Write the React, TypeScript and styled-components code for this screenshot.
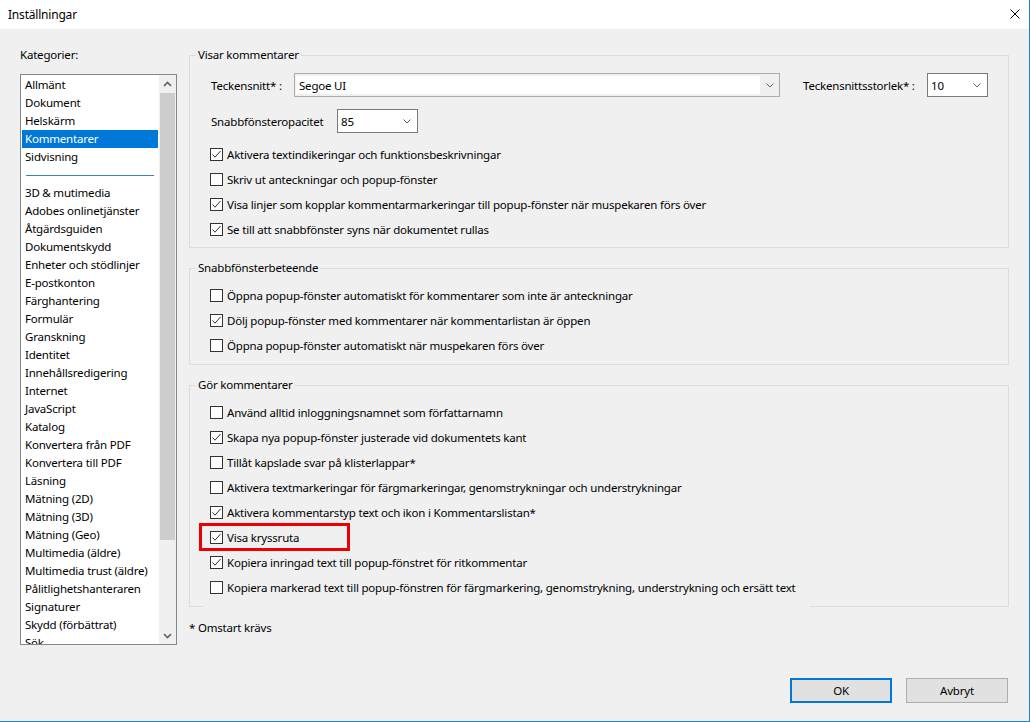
import React from "react";
import styled, { createGlobalStyle } from "styled-components";

const FONT = `"Noto Sans", "Open Sans", sans-serif`;

const GlobalStyle = createGlobalStyle`
  html, body { margin: 0; padding: 0; background: #ffffff; }
  body { font-family: ${FONT}; font-size: 11.5px; letter-spacing: -0.2px; color: #000; }
  *, *::before, *::after { box-sizing: border-box; }
`;

const Window = styled.div`
  width: 1030px;
  height: 722px;
  background: #f0f0f0;
  border-right: 1px solid #1883d7;
  border-bottom: 1px solid #1883d7;
  display: flex;
  flex-direction: column;
`;

const TitleBar = styled.div`
  height: 29px;
  flex: none;
  background: #ffffff;
  display: flex;
  align-items: center;
  justify-content: space-between;
  padding: 0 9px 0 8px;
  font-size: 12px;
`;

const CloseButton = styled.span`
  width: 10px;
  height: 10px;
  display: flex;
  margin-top: -1px;
`;

const Main = styled.div`
  display: flex;
  gap: 12px;
  padding: 18px 20px 0 20px;
`;

const Sidebar = styled.div`
  width: 157px;
  flex: none;
  display: flex;
  flex-direction: column;
`;

const SideLabel = styled.div`
  line-height: 16px;
  height: 16px;
  margin-bottom: 11px;
`;

const ListBox = styled.div`
  height: 571px;
  border: 1px solid #828790;
  background: #ffffff;
  display: flex;
  overflow: hidden;
`;

const ListItems = styled.div`
  flex: 1;
  padding: 1px;
  overflow: hidden;
`;

const Item = styled.div<{ $selected?: boolean }>`
  height: 18px;
  line-height: 18px;
  padding-left: 3px;
  white-space: nowrap;
  background: ${(p) => (p.$selected ? "#0078d7" : "transparent")};
  color: ${(p) => (p.$selected ? "#ffffff" : "#000000")};
`;

const Separator = styled.div`
  height: 18px;
  display: flex;
  align-items: center;
  padding: 0 4px;
  &::after {
    content: "";
    flex: 1;
    height: 1px;
    background: #3a80c4;
  }
`;

const ScrollBar = styled.div`
  width: 17px;
  flex: none;
  background: #f0f0f0;
  display: flex;
  flex-direction: column;
`;

const ScrollButton = styled.div`
  height: 17px;
  flex: none;
  display: flex;
  align-items: center;
  justify-content: center;
`;

const Track = styled.div`
  flex: 1;
  padding: 1px 1px 0 1px;
`;

const Thumb = styled.div`
  height: 447px;
  background: #cdcdcd;
`;

const Content = styled.div`
  width: 820px;
  flex: none;
  display: flex;
  flex-direction: column;
`;

const Group = styled.fieldset<{ $gap?: boolean }>`
  margin: ${(p) => (p.$gap ? "12px 0 0 0" : "0")};
  padding: 0;
  border: 1px solid #dcdcdc;
  min-width: 0;
`;

const Legend = styled.legend`
  margin-left: 6px;
  padding: 0 2px;
  line-height: 16px;
  height: 16px;
`;

const GroupBody = styled.div<{ $top: number; $bottom: number }>`
  padding: ${(p) => `${p.$top}px 0 ${p.$bottom}px 13px`};
`;

const FieldRow = styled.div<{ $mt?: number; $mb?: number }>`
  display: flex;
  align-items: center;
  height: 24px;
  margin: ${(p) => `${p.$mt ?? 0}px 0 ${p.$mb ?? 0}px 8px`};
`;

const FieldLabel = styled.span<{ $w: number; $ml?: number }>`
  width: ${(p) => p.$w}px;
  margin-left: ${(p) => p.$ml ?? 0}px;
  flex: none;
  white-space: nowrap;
`;

const Combo = styled.div<{ $w: number }>`
  width: ${(p) => p.$w}px;
  height: 24px;
  flex: none;
  border: 1px solid #adadad;
  display: flex;
  align-items: stretch;
  padding: 2px 0 2px 1px;
`;

const ComboField = styled.div`
  flex: 1;
  background: #ffffff;
  padding-left: 3px;
  display: flex;
  align-items: center;
`;

const ComboArrow = styled.div`
  width: 19px;
  flex: none;
  display: flex;
  align-items: center;
  justify-content: center;
`;

const Select = styled.div<{ $w: number }>`
  width: ${(p) => p.$w}px;
  height: 24px;
  flex: none;
  border: 1px solid #7a7a7a;
  background: #ffffff;
  display: flex;
  align-items: center;
  justify-content: space-between;
  padding: 0 6px 0 3px;
`;

const CheckRow = styled.div<{ $cover?: boolean; $highlight?: boolean }>`
  width: fit-content;
  height: ${(p) => (p.$cover ? "33px" : "25px")};
  padding: ${(p) => (p.$cover ? "0 14px 8px 7px" : "0 14px 0 7px")};
  margin-bottom: ${(p) => (p.$cover ? "-8px" : "0")};
  background: ${(p) => (p.$cover ? "#f0f0f0" : "transparent")};
  display: flex;
  align-items: center;
  gap: 4px;
  white-space: nowrap;
  position: relative;
  ${(p) =>
    p.$highlight
      ? `&::after {
    content: "";
    position: absolute;
    left: -4px;
    top: -2px;
    width: 151px;
    height: 28px;
    border: 3px solid #ee0000;
  }`
      : ""}
`;

const Box = styled.span`
  width: 13px;
  height: 13px;
  flex: none;
  border: 1px solid #333333;
  background: #ffffff;
  display: flex;
`;

const Footnote = styled.div`
  margin-top: 13px;
  line-height: 16px;
`;

const Footer = styled.div`
  margin-top: auto;
  display: flex;
  justify-content: flex-end;
  gap: 14px;
  padding: 0 21px 18px 0;
`;

const Button = styled.button<{ $default?: boolean }>`
  width: 102px;
  height: 25px;
  font-family: ${FONT};
  font-size: 11.5px;
  letter-spacing: -0.2px;
  color: #000;
  background: #e1e1e1;
  border: ${(p) => (p.$default ? "2px solid #0078d7" : "1px solid #adadad")};
  padding: 0;
`;

const Chevron = () => (
  <svg width="8" height="5" viewBox="0 0 8 5">
    <polyline points="0.5,0.5 4,4 7.5,0.5" fill="none" stroke="#606060" strokeWidth="1" />
  </svg>
);

const ScrollArrow = ({ up }: { up?: boolean }) => (
  <svg width="9" height="6" viewBox="0 0 9 6">
    <polyline
      points={up ? "1,5 4.5,1.5 8,5" : "1,1 4.5,4.5 8,1"}
      fill="none"
      stroke="#606060"
      strokeWidth="1.6"
    />
  </svg>
);

const Check = ({ checked }: { checked: boolean }) => (
  <Box>
    {checked && (
      <svg width="11" height="11" viewBox="0 0 11 11">
        <polyline points="1.5,5.5 4,8.2 9.5,2" fill="none" stroke="#333333" strokeWidth="1" />
      </svg>
    )}
  </Box>
);

type Opt = { text: string; checked: boolean; cover?: boolean; highlight?: boolean };

const CheckItem = ({ o }: { o: Opt }) => (
  <CheckRow $cover={o.cover} $highlight={o.highlight}>
    <Check checked={o.checked} />
    <span>{o.text}</span>
  </CheckRow>
);

const topItems = ["Allmänt", "Dokument", "Helskärm", "Kommentarer", "Sidvisning"];
const restItems = [
  "3D & mutimedia",
  "Adobes onlinetjänster",
  "Åtgärdsguiden",
  "Dokumentskydd",
  "Enheter och stödlinjer",
  "E-postkonton",
  "Färghantering",
  "Formulär",
  "Granskning",
  "Identitet",
  "Innehållsredigering",
  "Internet",
  "JavaScript",
  "Katalog",
  "Konvertera från PDF",
  "Konvertera till PDF",
  "Läsning",
  "Mätning (2D)",
  "Mätning (3D)",
  "Mätning (Geo)",
  "Multimedia (äldre)",
  "Multimedia trust (äldre)",
  "Pålitlighetshanteraren",
  "Signaturer",
  "Skydd (förbättrat)",
  "Sök",
];

const group1: Opt[] = [
  { text: "Aktivera textindikeringar och funktionsbeskrivningar", checked: true },
  { text: "Skriv ut anteckningar och popup-fönster", checked: false },
  { text: "Visa linjer som kopplar kommentarmarkeringar till popup-fönster när muspekaren förs över", checked: true },
  { text: "Se till att snabbfönster syns när dokumentet rullas", checked: true },
];

const group2: Opt[] = [
  { text: "Öppna popup-fönster automatiskt för kommentarer som inte är anteckningar", checked: false },
  { text: "Dölj popup-fönster med kommentarer när kommentarlistan är öppen", checked: true },
  { text: "Öppna popup-fönster automatiskt när muspekaren förs över", checked: false },
];

const group3: Opt[] = [
  { text: "Använd alltid inloggningsnamnet som författarnamn", checked: false },
  { text: "Skapa nya popup-fönster justerade vid dokumentets kant", checked: true },
  { text: "Tillåt kapslade svar på klisterlappar*", checked: false },
  { text: "Aktivera textmarkeringar för färgmarkeringar, genomstrykningar och understrykningar", checked: false },
  { text: "Aktivera kommentarstyp text och ikon i Kommentarslistan*", checked: true },
  { text: "Visa kryssruta", checked: true, highlight: true },
  { text: "Kopiera inringad text till popup-fönstret för ritkommentar", checked: true },
  {
    text: "Kopiera markerad text till popup-fönstren för färgmarkering, genomstrykning, understrykning och ersätt text",
    checked: false,
    cover: true,
  },
];

export default function App() {
  return (
    <>
      <GlobalStyle />
      <Window>
        <TitleBar>
          <span>Inställningar</span>
          <CloseButton>
            <svg width="10" height="10" viewBox="0 0 10 10">
              <path d="M0.5 0.5 L9.5 9.5 M9.5 0.5 L0.5 9.5" stroke="#000" strokeWidth="1" />
            </svg>
          </CloseButton>
        </TitleBar>
        <Main>
          <Sidebar>
            <SideLabel>Kategorier:</SideLabel>
            <ListBox>
              <ListItems>
                {topItems.map((t) => (
                  <Item key={t} $selected={t === "Kommentarer"}>
                    {t}
                  </Item>
                ))}
                <Separator />
                {restItems.map((t) => (
                  <Item key={t}>{t}</Item>
                ))}
              </ListItems>
              <ScrollBar>
                <ScrollButton>
                  <ScrollArrow up />
                </ScrollButton>
                <Track>
                  <Thumb />
                </Track>
                <ScrollButton>
                  <ScrollArrow />
                </ScrollButton>
              </ScrollBar>
            </ListBox>
          </Sidebar>
          <Content>
            <Group>
              <Legend>Visar kommentarer</Legend>
              <GroupBody $top={10} $bottom={5}>
                <FieldRow>
                  <FieldLabel $w={83}>Teckensnitt* :</FieldLabel>
                  <Combo $w={486}>
                    <ComboField>Segoe UI</ComboField>
                    <ComboArrow>
                      <Chevron />
                    </ComboArrow>
                  </Combo>
                  <FieldLabel $w={124} $ml={23}>
                    Teckensnittsstorlek* :
                  </FieldLabel>
                  <Select $w={61}>
                    <span>10</span>
                    <Chevron />
                  </Select>
                </FieldRow>
                <FieldRow $mt={12} $mb={9}>
                  <FieldLabel $w={126}>Snabbfönsteropacitet</FieldLabel>
                  <Select $w={81}>
                    <span>85</span>
                    <Chevron />
                  </Select>
                </FieldRow>
                {group1.map((o) => (
                  <CheckItem key={o.text} o={o} />
                ))}
              </GroupBody>
            </Group>
            <Group $gap>
              <Legend>Snabbfönsterbeteende</Legend>
              <GroupBody $top={7} $bottom={6}>
                {group2.map((o) => (
                  <CheckItem key={o.text} o={o} />
                ))}
              </GroupBody>
            </Group>
            <Group $gap>
              <Legend>Gör kommentarer</Legend>
              <GroupBody $top={7} $bottom={6}>
                {group3.map((o) => (
                  <CheckItem key={o.text} o={o} />
                ))}
              </GroupBody>
            </Group>
            <Footnote>* Omstart krävs</Footnote>
          </Content>
        </Main>
        <Footer>
          <Button $default>OK</Button>
          <Button>Avbryt</Button>
        </Footer>
      </Window>
    </>
  );
}
